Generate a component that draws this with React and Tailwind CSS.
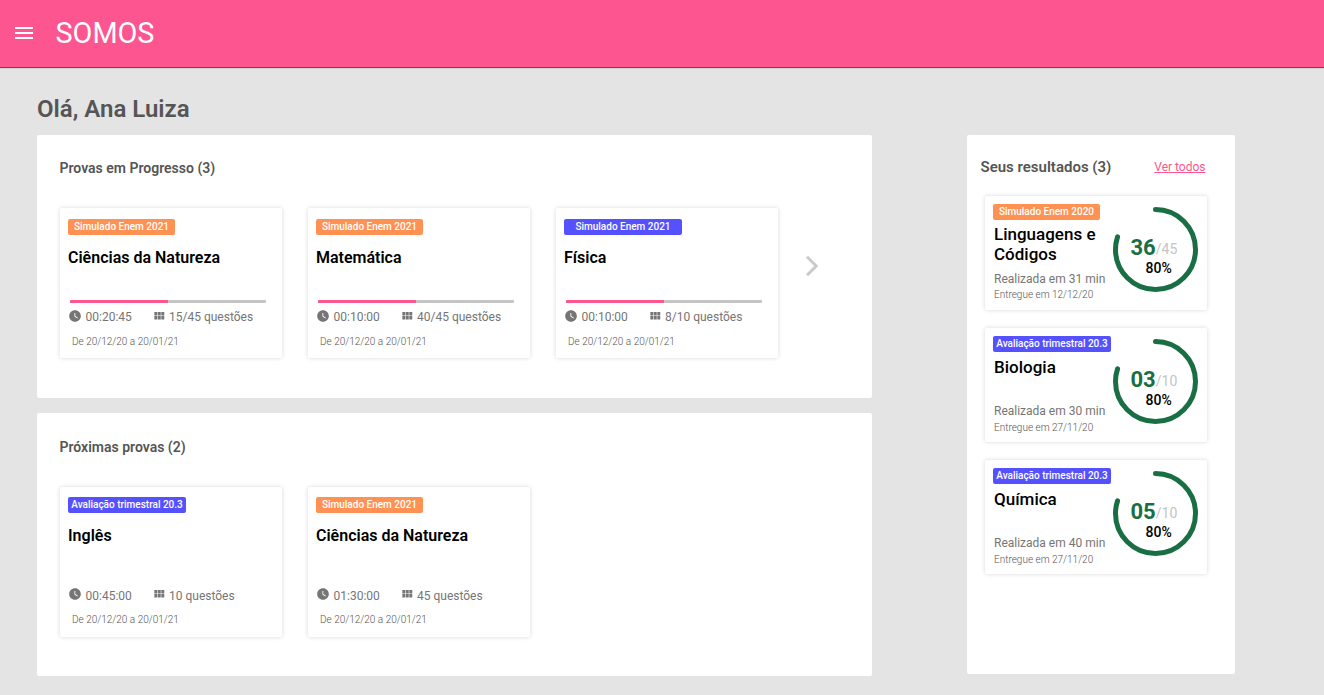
const badgeColors = {
  orange: 'w-[107px] bg-[#ff9152]',
  blue: 'w-[118px] bg-[#5551ff]',
};

function Badge({ color, children }) {
  return (
    <span
      className={`flex h-4 items-center justify-center whitespace-nowrap rounded-[2px] text-[10px] font-medium leading-4 text-white ${badgeColors[color]}`}
    >
      {children}
    </span>
  );
}

function ClockIcon() {
  return (
    <svg viewBox="0 0 24 24" className="size-[14px] shrink-0 fill-[#757575]">
      <path d="M12 2C6.5 2 2 6.5 2 12s4.500 10 10 10 10-4.500 10-10S17.500 2 12 2zm4.200 14.200L11 13V7h1.500v5.200l4.500 2.700-.8 1.300z" />
    </svg>
  );
}

function GridIcon() {
  return (
    <svg viewBox="0 0 24 24" className="size-[14px] shrink-0 fill-[#757575]">
      <path d="M4 11h5V5H4v6zm0 7h5v-6H4v6zm6 0h5v-6h-5v6zm6 0h5v-6h-5v6zm-6-7h5V5h-5v6zm6-6v6h5V5h-5z" />
    </svg>
  );
}

function ExamCard({ color, tag, title, time, questions, progress }) {
  const active = progress !== undefined;
  return (
    <article
      className={`h-[150px] w-[222px] rounded-[2px] bg-white px-2 shadow-[0_0_4px_rgba(0,0,0,0.16)] ${active ? 'pt-[11px]' : 'pt-[10px]'}`}
    >
      <Badge color={color}>{tag}</Badge>
      <h3 className="mt-[13px] h-5 text-base font-semibold leading-5 text-black">{title}</h3>
      <div className="ml-0.5 mt-8 h-[3px] w-[196px] overflow-hidden rounded-[1px]">
        {active && (
          <div className="h-full bg-[#c4c4c4]">
            <div className="h-full bg-[#fc558f]" style={{ width: `${progress}%` }} />
          </div>
        )}
      </div>
      <div className={`flex h-4 text-xs leading-4 text-[#757575] ${active ? 'mt-[6px]' : 'mt-[7px]'}`}>
        <div className="flex w-[84px] gap-[3.500px]">
          <span className={active ? '' : '-mt-px'}>
            <ClockIcon />
          </span>
          <span>{time}</span>
        </div>
        <div className="flex gap-[3px]">
          <span className={active ? '' : '-mt-px'}>
            <GridIcon />
          </span>
          <span>{questions} questões</span>
        </div>
      </div>
      <p className={`ml-1 text-[10px] font-light leading-3 text-[#555] ${active ? 'mt-[11px]' : 'mt-[10px]'}`}>
        De 20/12/20 a 20/01/21
      </p>
    </article>
  );
}

function ScoreRing({ score, total, percent }) {
  const length = 2 * Math.PI * 40;
  return (
    <div className="grid size-[85px] shrink-0 items-start">
      <svg viewBox="0 0 85 85" className="col-start-1 row-start-1 size-[85px]">
        <circle
          cx="42.5"
          cy="42.5"
          r="40"
          fill="none"
          stroke="#196f43"
          strokeWidth="5"
          strokeLinecap="round"
          strokeDasharray={`${(length * percent) / 100} ${length}`}
          transform="rotate(-90 42.5 42.5)"
        />
      </svg>
      <div className="col-start-1 row-start-1 flex w-full flex-col pt-[29px]">
        <div className="ml-[17.500px] flex h-6 items-baseline whitespace-nowrap leading-6">
          <span className="text-[22px] font-bold text-[#196f43]">{score}</span>
          <span className="-translate-y-px text-sm text-[#c4c4c4]">/{total}</span>
        </div>
        <span className="-mt-[0.5px] ml-[32.500px] h-4 text-[14px] font-medium leading-4 text-black">{percent}%</span>
      </div>
    </div>
  );
}

function ResultCard({ color, tag, title, minutes, date, score, total }) {
  const twoLines = title.length > 12;
  return (
    <article className="flex h-[114px] w-[222px] rounded-[2px] bg-white pl-2 shadow-[0_0_4px_rgba(0,0,0,0.16)]">
      <div className="w-[120px] shrink-0 pt-2">
        <Badge color={color}>{tag}</Badge>
        <div className="pl-px">
          <h3
            className={`h-10 w-[112px] text-[17px] font-medium leading-5 text-black ${twoLines ? 'mt-1' : 'mt-[5px]'}`}
          >
            {title}
          </h3>
          <p className={`whitespace-nowrap text-xs leading-4 text-[#757575] ${twoLines ? 'mt-[7px]' : 'mt-[6px]'}`}>
            Realizada em {minutes} min
          </p>
          <p
            className={`whitespace-nowrap text-[10px] font-light leading-3 text-[#555] ${twoLines ? 'mt-0.5' : 'mt-[3px]'}`}
          >
            Entregue em {date}
          </p>
        </div>
      </div>
      <div className="pt-[11px]">
        <ScoreRing score={score} total={total} percent={80} />
      </div>
    </article>
  );
}

const inProgress = [
  { color: 'orange', tag: 'Simulado Enem 2021', title: 'Ciências da Natureza', time: '00:20:45', questions: '15/45', progress: 50 },
  { color: 'orange', tag: 'Simulado Enem 2021', title: 'Matemática', time: '00:10:00', questions: '40/45', progress: 50 },
  { color: 'blue', tag: 'Simulado Enem 2021', title: 'Física', time: '00:10:00', questions: '8/10', progress: 50 },
];

const upcoming = [
  { color: 'blue', tag: 'Avaliação trimestral 20.3', title: 'Inglês', time: '00:45:00', questions: '10' },
  { color: 'orange', tag: 'Simulado Enem 2021', title: 'Ciências da Natureza', time: '01:30:00', questions: '45' },
];

const results = [
  { color: 'orange', tag: 'Simulado Enem 2020', title: 'Linguagens e Códigos', minutes: 31, date: '12/12/20', score: '36', total: 45 },
  { color: 'blue', tag: 'Avaliação trimestral 20.3', title: 'Biologia', minutes: 30, date: '27/11/20', score: '03', total: 10 },
  { color: 'blue', tag: 'Avaliação trimestral 20.3', title: 'Química', minutes: 40, date: '27/11/20', score: '05', total: 10 },
];

export default function App() {
  return (
    <div className="h-[695px] w-[1324px] overflow-hidden bg-[#e4e4e4] font-['Roboto',sans-serif]">
      <header className="flex h-[68px] items-center border-b border-[#a42c56] bg-[#fc558f] pb-px pl-3 text-white shadow-[0_1px_0_#cfcfcf]">
        <button aria-label="Menu">
          <svg viewBox="0 0 24 24" className="size-6 fill-white">
            <path d="M3 18h18v-2H3v2zm0-5h18v-2H3v2zm0-7v2h18V6H3z" />
          </svg>
        </button>
        <span className="ml-[19.500px] text-[28.800px] leading-8">SOMOS</span>
      </header>

      <main className="flex pl-[37px]">
        <div className="w-[835px]">
          <h1 className="mt-[25px] h-8 text-2xl font-semibold leading-8 text-[#555]">Olá, Ana Luiza</h1>
          <section className="mt-[10px] h-[263px] rounded-[2px] bg-white pl-[23px] pt-[23px]">
            <h2 className="-ml-[0.5px] h-5 text-sm font-semibold leading-5 text-[#555]">Provas em Progresso (3)</h2>
            <div className="mt-[30px] flex gap-[26px]">
              {inProgress.map((exam) => (
                <ExamCard key={exam.title} {...exam} />
              ))}
              <button aria-label="Próximo" className="-ml-1 mt-[46px] size-6">
                <svg viewBox="0 0 24 24" className="size-6 fill-[#c9c9c9] stroke-[#c9c9c9] stroke-[0.5]">
                  <path d="M6.230 20.230L8 22l10-10L8 2 6.230 3.770 14.460 12z" />
                </svg>
              </button>
            </div>
          </section>
          <section className="mt-[15px] h-[263px] rounded-[2px] bg-white pl-[23px] pt-6">
            <h2 className="-ml-[0.5px] h-5 text-sm font-semibold leading-5 text-[#555]">Próximas provas (2)</h2>
            <div className="mt-[30px] flex gap-[26px]">
              {upcoming.map((exam) => (
                <ExamCard key={exam.title} {...exam} />
              ))}
            </div>
          </section>
        </div>

        <aside className="ml-[95px] mt-[67px] h-[539px] w-[268px] rounded-[2px] bg-white pt-[22px]">
          <div className="flex h-5 items-center justify-between pl-[13.500px] pr-[29.500px]">
            <h2 className="text-[15px] font-semibold leading-5 text-[#555]">Seus resultados (3)</h2>
            <a href="#" className="text-xs leading-5 text-[#fc558f] underline">
              Ver todos
            </a>
          </div>
          <div className="ml-[18px] mt-[19px] flex flex-col gap-[18px]">
            {results.map((result) => (
              <ResultCard key={result.title} {...result} />
            ))}
          </div>
        </aside>
      </main>
    </div>
  );
}
